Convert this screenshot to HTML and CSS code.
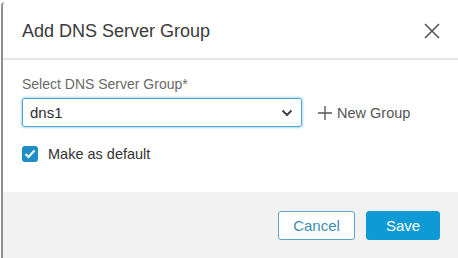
FILE: index.html
```html
<!DOCTYPE html>
<html lang="en">
<head>
  <meta charset="UTF-8">
  <title>Add DNS Server Group</title>
  <link rel="stylesheet" href="styles.css">
</head>
<body>

<div class="dialog">
  <div class="dialog-header">
    <h1 class="dialog-title">Add DNS Server Group</h1>
    <a href="javascript:void(0)" class="close" aria-label="Close">
      <svg width="16" height="16" viewBox="0 0 16 16">
        <path d="M1 1 L15 15 M15 1 L1 15" stroke="#555" stroke-width="1.6" fill="none"/>
      </svg>
    </a>
  </div>

  <div class="dialog-body">
    <label class="field-label">Select DNS Server Group*</label>
    <div class="field-row">
      <div class="select">
        <span class="select-value">dns1</span>
        <svg class="chevron" width="12" height="8" viewBox="0 0 12 8">
          <path d="M1.5 1.5 L6 6 L10.5 1.5" stroke="#444" stroke-width="2" fill="none"/>
        </svg>
      </div>
      <a href="javascript:void(0)" class="new-group">
        <svg width="14" height="14" viewBox="0 0 14 14">
          <path d="M7 0 V14 M0 7 H14" stroke="#555" stroke-width="1.3" fill="none"/>
        </svg>
        New Group
      </a>
    </div>

    <label class="check">
      <span class="check-box">
        <svg width="12" height="10" viewBox="0 0 12 10">
          <path d="M1.5 5 L4.5 8 L10.5 1.5" stroke="#fff" stroke-width="2" fill="none"/>
        </svg>
      </span>
      Make as default
    </label>
  </div>

  <div class="dialog-footer">
    <button class="btn btn-cancel">Cancel</button>
    <button class="btn btn-save">Save</button>
  </div>
</div>

</body>
</html>
```

FILE: styles.css
```css
* {
  margin: 0;
  padding: 0;
  box-sizing: border-box;
}

body {
  width: 458px;
  height: 258px;
  overflow: hidden;
  background: #fff;
  font-family: "Liberation Sans", Arial, sans-serif;
}

.dialog {
  margin: 2px 0 0 1px;
  height: 256px;
  border-left: 2px solid #8e8e8e;
  border-top-left-radius: 4px;
  background: #fff;
  display: flex;
  flex-direction: column;
}

.dialog-header {
  height: 58px;
  border-bottom: 2px solid #e6e6e6;
  display: flex;
  align-items: center;
  justify-content: space-between;
  padding: 0 18px 0 19px;
}

.dialog-title {
  font-size: 18px;
  font-weight: 400;
  color: #3a3a3a;
  padding-top: 2px;
}

.close {
  display: flex;
  padding-top: 2px;
}

.dialog-body {
  padding: 16px 0 0 19px;
  height: 132px;
}

.field-label {
  display: block;
  font-size: 14px;
  color: #6a6a6a;
  line-height: 16px;
}

.field-row {
  display: flex;
  align-items: center;
  margin-top: 6px;
}

.select {
  width: 280px;
  height: 29px;
  border: 1px solid #4fa8d2;
  border-radius: 3px;
  box-shadow: 0 0 2px 1px rgba(79, 168, 210, 0.45);
  display: flex;
  align-items: center;
  justify-content: space-between;
  padding: 0 8px 0 7px;
}

.select-value {
  font-size: 15px;
  color: #2e2e2e;
}

.new-group {
  margin-left: 16px;
  display: flex;
  align-items: center;
  gap: 5px;
  font-size: 14.5px;
  color: #555;
  text-decoration: none;
}

.check {
  display: flex;
  align-items: center;
  margin-top: 19px;
  font-size: 14.5px;
  color: #333;
}

.check-box {
  width: 16px;
  height: 16px;
  border-radius: 3px;
  background: #1e8ec4;
  display: flex;
  align-items: center;
  justify-content: center;
  margin-right: 10px;
}

.dialog-footer {
  flex: 1;
  background: #f2f2f2;
  display: flex;
  justify-content: flex-end;
  align-items: flex-start;
  gap: 11px;
  padding: 19px 18px 0 0;
}

.btn {
  height: 29px;
  border-radius: 3px;
  font-family: "Liberation Sans", Arial, sans-serif;
  font-size: 15px;
}

.btn-cancel {
  width: 77px;
  background: #fff;
  border: 1px solid #5aa6c7;
  color: #3d8db3;
}

.btn-save {
  width: 74px;
  background: #0d9ad5;
  border: 1px solid #0d9ad5;
  color: #fff;
}
```
